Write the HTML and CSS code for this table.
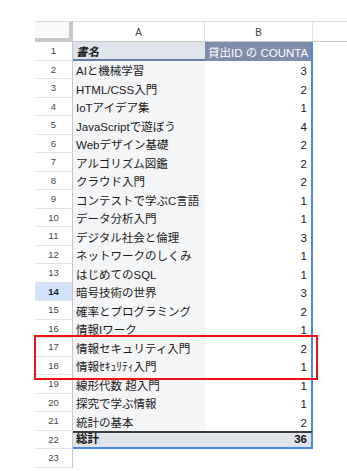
FILE: index.html
```html
<!DOCTYPE html>
<html lang="ja">
<head>
<meta charset="utf-8">
<title>Pivot</title>
<link rel="stylesheet" href="styles.css">
</head>
<body>
<div class="sheet">
  <div class="row colhead">
    <div class="corner"></div>
    <div class="ch">A</div>
    <div class="ch">B</div>
    <div class="ch last"></div>
  </div>
  <div class="row">
    <div class="rn">1</div>
    <div class="cell label head-a">書名</div>
    <div class="cell val head-b">貸出ID の COUNTA</div>
    <div class="cell empty"></div>
  </div>
  <div class="row"><div class="rn">2</div><div class="cell label">AIと機械学習</div><div class="cell val num">3</div><div class="cell empty"></div></div>
  <div class="row"><div class="rn">3</div><div class="cell label">HTML/CSS入門</div><div class="cell val num">2</div><div class="cell empty"></div></div>
  <div class="row"><div class="rn">4</div><div class="cell label">IoTアイデア集</div><div class="cell val num">1</div><div class="cell empty"></div></div>
  <div class="row"><div class="rn">5</div><div class="cell label">JavaScriptで遊ぼう</div><div class="cell val num">4</div><div class="cell empty"></div></div>
  <div class="row"><div class="rn">6</div><div class="cell label">Webデザイン基礎</div><div class="cell val num">2</div><div class="cell empty"></div></div>
  <div class="row"><div class="rn">7</div><div class="cell label">アルゴリズム図鑑</div><div class="cell val num">2</div><div class="cell empty"></div></div>
  <div class="row"><div class="rn">8</div><div class="cell label">クラウド入門</div><div class="cell val num">2</div><div class="cell empty"></div></div>
  <div class="row"><div class="rn">9</div><div class="cell label">コンテストで学ぶC言語</div><div class="cell val num">1</div><div class="cell empty"></div></div>
  <div class="row"><div class="rn">10</div><div class="cell label">データ分析入門</div><div class="cell val num">1</div><div class="cell empty"></div></div>
  <div class="row"><div class="rn">11</div><div class="cell label">デジタル社会と倫理</div><div class="cell val num">3</div><div class="cell empty"></div></div>
  <div class="row"><div class="rn">12</div><div class="cell label">ネットワークのしくみ</div><div class="cell val num">1</div><div class="cell empty"></div></div>
  <div class="row"><div class="rn">13</div><div class="cell label">はじめてのSQL</div><div class="cell val num">1</div><div class="cell empty"></div></div>
  <div class="row"><div class="rn active">14</div><div class="cell label">暗号技術の世界</div><div class="cell val num">3</div><div class="cell empty"></div></div>
  <div class="row"><div class="rn">15</div><div class="cell label">確率とプログラミング</div><div class="cell val num">2</div><div class="cell empty"></div></div>
  <div class="row"><div class="rn">16</div><div class="cell label">情報Iワーク</div><div class="cell val num">1</div><div class="cell empty"></div></div>
  <div class="row"><div class="rn">17</div><div class="cell label">情報セキュリティ入門</div><div class="cell val num">2</div><div class="cell empty"></div></div>
  <div class="row"><div class="rn">18</div><div class="cell label">情報ｾｷｭﾘﾃｨ入門</div><div class="cell val num">1</div><div class="cell empty"></div></div>
  <div class="row"><div class="rn">19</div><div class="cell label">線形代数 超入門</div><div class="cell val num">1</div><div class="cell empty"></div></div>
  <div class="row"><div class="rn">20</div><div class="cell label">探究で学ぶ情報</div><div class="cell val num">1</div><div class="cell empty"></div></div>
  <div class="row"><div class="rn">21</div><div class="cell label">統計の基本</div><div class="cell val num">2</div><div class="cell empty"></div></div>
  <div class="row total"><div class="rn">22</div><div class="cell label">総計</div><div class="cell val num">36</div><div class="cell empty"></div></div>
  <div class="row"><div class="rn">23</div><div class="cell blank"></div><div class="cell blank"></div><div class="cell empty"></div></div>
  <div class="highlight"></div>
</div>
</body>
</html>
```
FILE: styles.css
```css
* { box-sizing: border-box; }
html, body {
  margin: 0;
  padding: 0;
  background: #ffffff;
  height: 100%;
  overflow: hidden;
}
body {
  font-family: "Liberation Sans", Arial, "Noto Sans CJK JP", sans-serif;
  color: #202124;
}
.sheet {
  position: relative;
  padding: 21px 0 0 35px;
}
.row {
  display: grid;
  grid-template-columns: 38px 132px 108px 1fr;
  height: 18.5px;
}
.colhead {
  height: 21px;
}
.corner {
  background: #f8f9fa;
  border-top: 1px solid #dadce0;
  border-right: 4px solid #c4c7c5;
  border-bottom: 4px solid #c4c7c5;
}
.ch {
  border-top: 1px solid #dadce0;
  border-right: 1px solid #e1e3e1;
  border-bottom: 1px solid #c4c7c5;
  font-size: 10px;
  color: #444746;
  display: flex;
  align-items: center;
  justify-content: center;
  padding-top: 1px;
}
.ch.last { border-right: none; }
.rn {
  border-right: 1px solid #c4c7c5;
  border-bottom: 1px solid #e1e3e1;
  font-size: 9.5px;
  color: #444746;
  display: flex;
  align-items: center;
  justify-content: center;
}
.rn.active {
  background: #d3e3fd;
  color: #0b1f44;
  font-weight: bold;
}
.cell {
  display: flex;
  align-items: flex-end;
  padding: 0 3px 1px;
  font-size: 11.5px;
  line-height: 14px;
  white-space: nowrap;
  overflow: hidden;
}
.label {
  background: #f4f5f7;
  color: #1a1a1a;
}
.val {
  background: #ffffff;
  border-right: 2px solid #4a89e8;
  color: #1a1a1a;
}
.num {
  justify-content: flex-end;
  padding-right: 4px;
}
.empty { background: #ffffff; }
.blank { background: #ffffff; }
.head-a {
  background: #dee3ec;
  font-style: italic;
  font-weight: bold;
  border-bottom: 2px solid #6a7fa6;
  padding-bottom: 0;
}
.head-b {
  background: #7d8cab;
  color: #ffffff;
  padding-left: 3px;
  padding-right: 0;
}
.total .label,
.total .val {
  background: #dfe3ea;
  font-weight: bold;
  border-top: 2px solid #3c3c3c;
  border-bottom: 2px solid #4a89e8;
  color: #111;
}
.highlight {
  position: absolute;
  left: 34px;
  top: 335px;
  width: 284px;
  height: 45px;
  border: 2px solid #f01010;
  pointer-events: none;
}
```
